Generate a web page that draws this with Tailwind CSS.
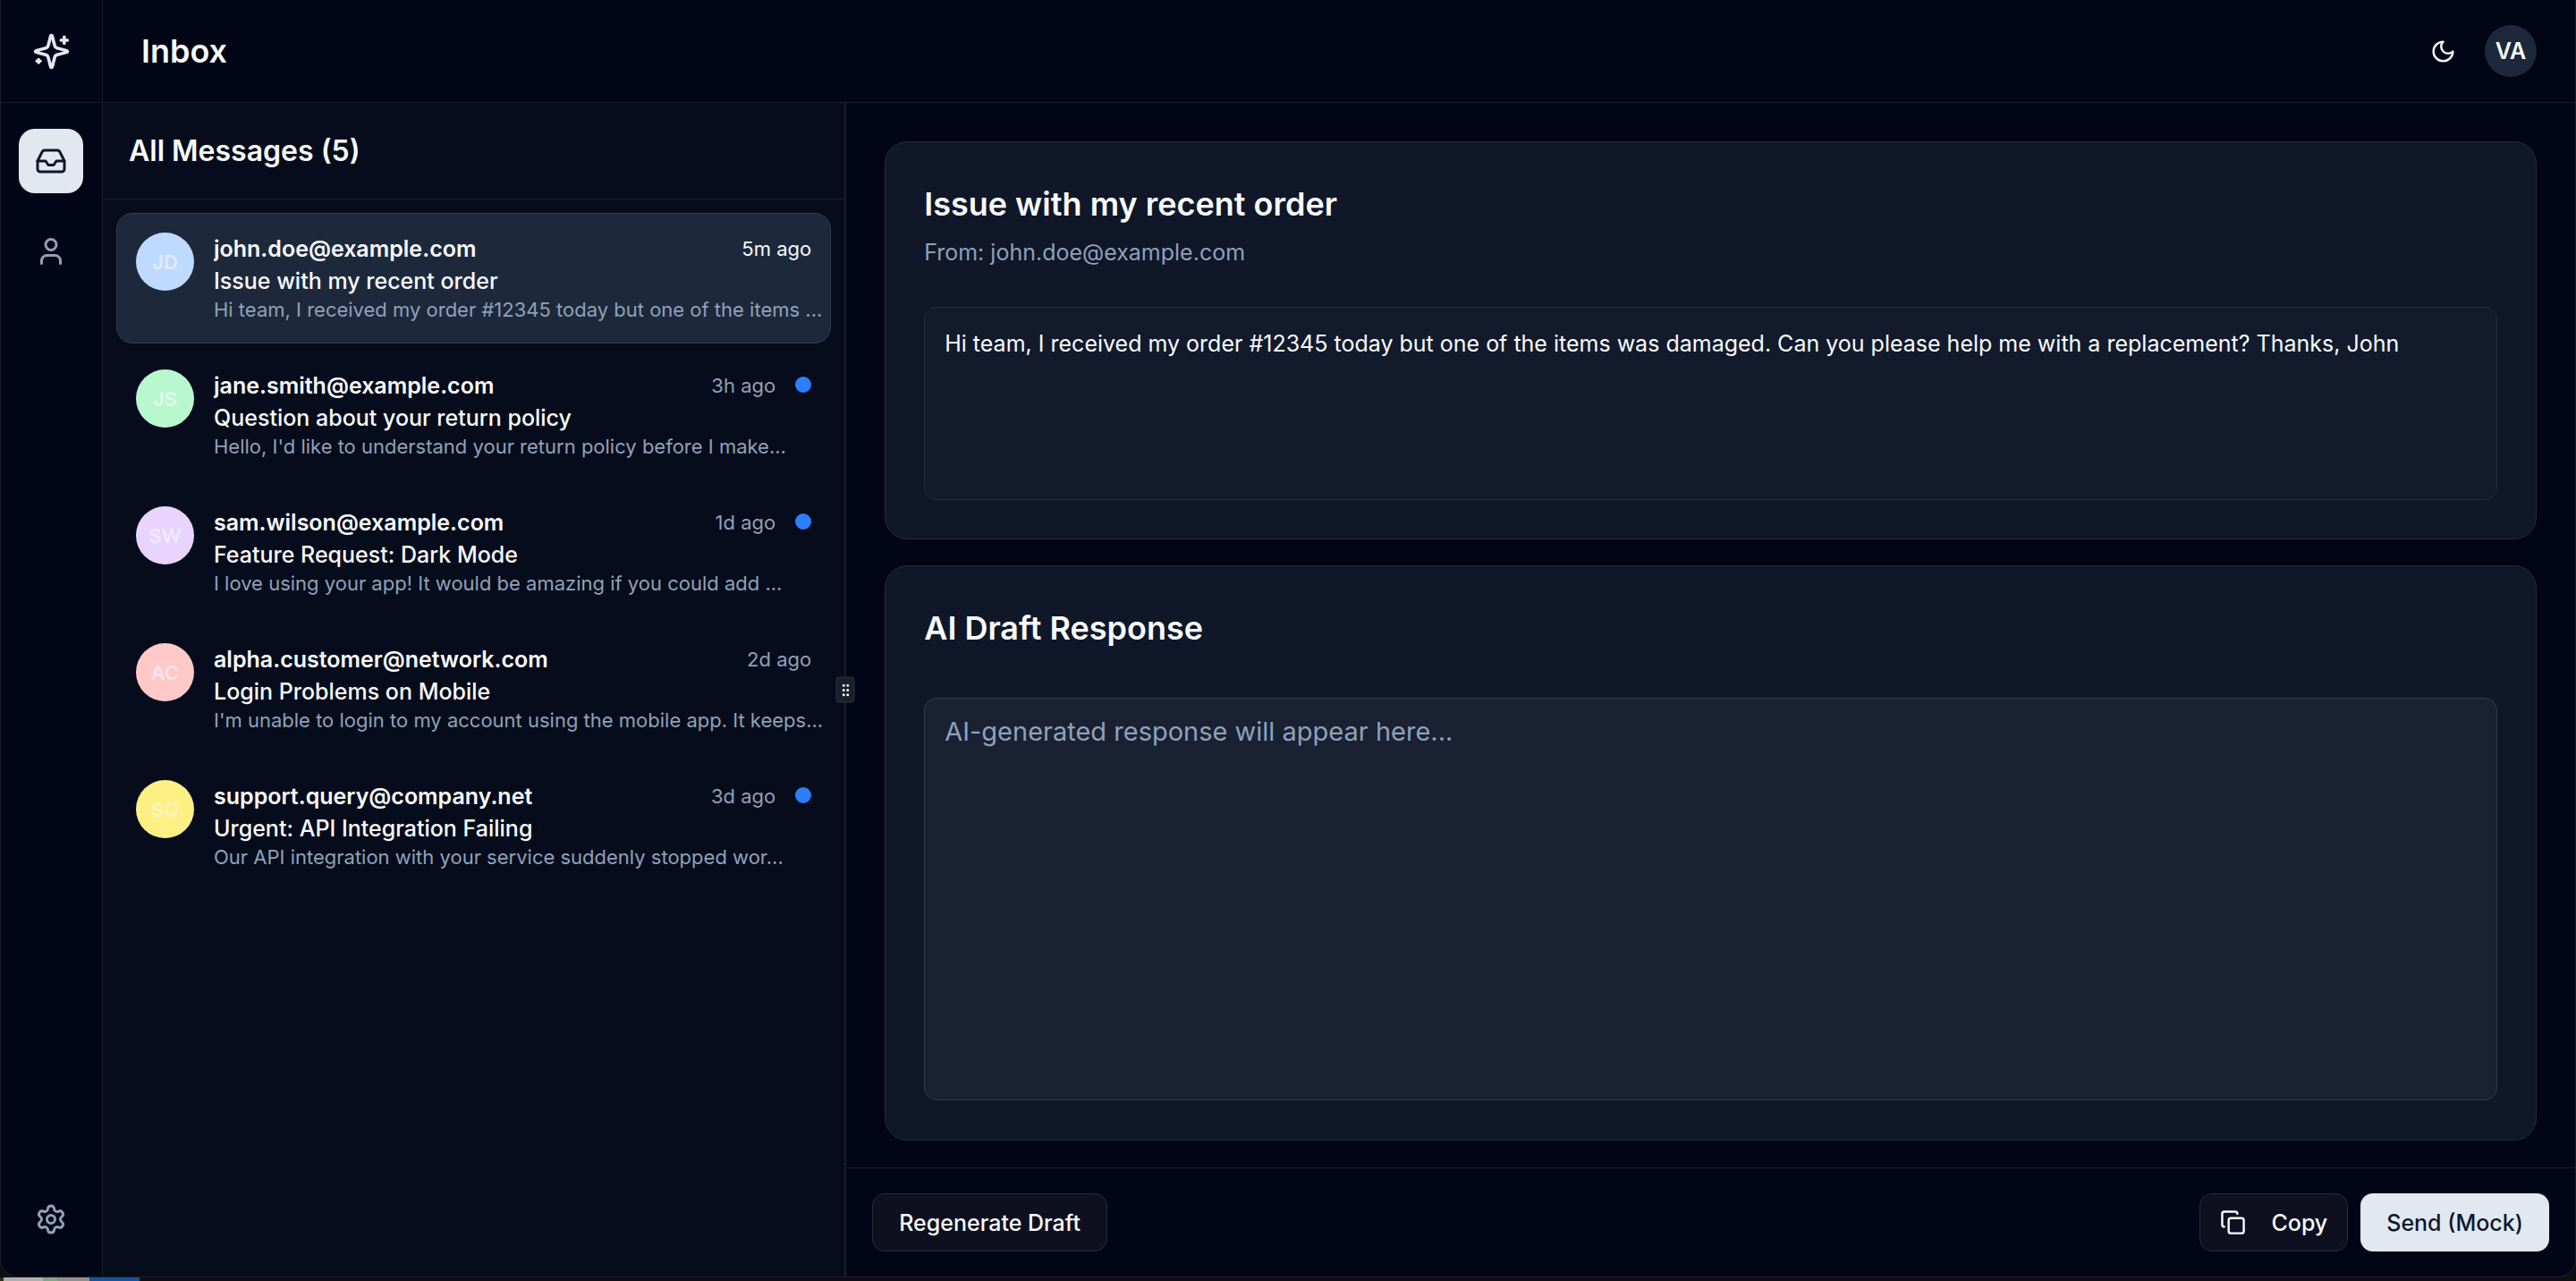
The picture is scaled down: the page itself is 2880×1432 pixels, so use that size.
<!DOCTYPE html>
<html lang="en">
<head>
<meta charset="utf-8">
<title>Inbox</title>
<script src="https://cdn.jsdelivr.net/npm/@tailwindcss/browser@4"></script>
</head>
<body class="h-screen overflow-hidden bg-[#0e0e10] font-[Inter,sans-serif] text-[25px] leading-9 text-slate-50">
<div class="flex h-full flex-col">
  <div class="flex min-h-0 flex-1 overflow-hidden rounded-b-[20px] border-x border-b border-[#1b1e2c] bg-[#020515]">

    <nav aria-label="Main" class="flex w-[114px] shrink-0 flex-col items-center border-r border-[#1b1e2c] pr-px">
      <div class="flex h-[115px] w-full items-center justify-center border-b border-[#1b1e2c]">
        <svg class="size-[43px] text-slate-200" viewBox="0 0 24 24" fill="none" stroke="currentColor" stroke-width="2" stroke-linecap="round" stroke-linejoin="round"><path d="M9.937 15.5A2 2 0 0 0 8.5 14.063l-6.135-1.582a.5.5 0 0 1 0-.962L8.5 9.936A2 2 0 0 0 9.937 8.5l1.582-6.135a.5.5 0 0 1 .963 0L14.063 8.5A2 2 0 0 0 15.5 9.937l6.135 1.581a.5.5 0 0 1 0 .964L15.5 14.063a2 2 0 0 0-1.437 1.437l-1.582 6.135a.5.5 0 0 1-.963 0z"/><path d="M20 3v4"/><path d="M22 5h-4"/><path d="M4 17v2"/><path d="M5 18H3"/></svg>
      </div>
      <div class="flex flex-1 flex-col gap-[29px] pt-[29px]">
        <a href="#inbox" aria-label="Inbox" aria-current="page" class="flex size-[72px] items-center justify-center rounded-[18px] bg-slate-200 text-slate-900">
          <svg class="size-9" viewBox="0 0 24 24" fill="none" stroke="currentColor" stroke-width="2" stroke-linecap="round" stroke-linejoin="round"><path d="M22 12h-6l-2 3h-4l-2-3H2"/><path d="M5.45 5.11 2 12v6a2 2 0 0 0 2 2h16a2 2 0 0 0 2-2v-6l-3.45-6.89A2 2 0 0 0 16.76 4H7.24a2 2 0 0 0-1.79 1.11z"/></svg>
        </a>
        <a href="#profile" aria-label="Profile" class="flex size-[72px] items-center justify-center rounded-[18px] text-[#90a1b9]">
          <svg class="size-9" viewBox="0 0 24 24" fill="none" stroke="currentColor" stroke-width="2" stroke-linecap="round" stroke-linejoin="round"><path d="M19 21v-2a4 4 0 0 0-4-4H9a4 4 0 0 0-4 4v2"/><circle cx="12" cy="7" r="4"/></svg>
        </a>
      </div>
      <a href="#settings" aria-label="Settings" class="mb-7 flex size-[72px] items-center justify-center rounded-[18px] text-[#90a1b9]">
        <svg class="size-9" viewBox="0 0 24 24" fill="none" stroke="currentColor" stroke-width="2" stroke-linecap="round" stroke-linejoin="round"><path d="M9.671 4.136a2.34 2.34 0 0 1 4.659 0 2.34 2.34 0 0 0 3.319 1.915 2.34 2.34 0 0 1 2.33 4.033 2.34 2.34 0 0 0 0 3.831 2.34 2.34 0 0 1-2.33 4.033 2.34 2.34 0 0 0-3.319 1.915 2.34 2.34 0 0 1-4.659 0 2.34 2.34 0 0 0-3.32-1.915 2.34 2.34 0 0 1-2.33-4.033 2.34 2.34 0 0 0 0-3.831A2.34 2.34 0 0 1 6.35 6.051a2.34 2.34 0 0 0 3.319-1.915"/><circle cx="12" cy="12" r="3"/></svg>
      </a>
    </nav>

    <div class="flex min-w-0 flex-1 flex-col">
      <header class="flex h-[115px] shrink-0 items-center justify-between border-b border-[#1b1e2c] px-[43px]">
        <h1 class="text-[36px] font-semibold leading-none">Inbox</h1>
        <div class="flex items-center gap-[14px]">
          <button type="button" aria-label="Toggle theme" class="flex size-[65px] items-center justify-center rounded-[14px]">
            <svg class="size-[29px]" viewBox="0 0 24 24" fill="none" stroke="currentColor" stroke-width="2" stroke-linecap="round" stroke-linejoin="round"><path d="M12 3a6 6 0 0 0 9 9 9 9 0 1 1-9-9Z"/></svg>
          </button>
          <button type="button" aria-label="Account" class="flex size-[58px] items-center justify-center rounded-full bg-[#1d293b] font-semibold">VA</button>
        </div>
      </header>

      <div class="flex min-h-0 flex-1">
        <section aria-label="Messages" class="flex w-[30%] shrink-0 flex-col bg-[#060c1b]">
          <h2 class="flex h-[108px] shrink-0 items-center border-b border-[#1b1e2c] px-[29px] text-[32px] font-semibold">All Messages (5)</h2>
          <ul class="flex flex-col gap-[7px] px-[15px] pt-[15px]">
            <li>
              <a href="#m1" aria-current="true" class="flex items-start gap-[22px] rounded-[18px] border border-[#333d4e] bg-[#1d293b] px-[21px] pb-[22px] pt-[21px]">
                <span class="flex size-[65px] shrink-0 items-center justify-center rounded-full bg-blue-200 text-[22px] font-semibold text-[#e2ecfb]">JD</span>
                <span class="min-w-0 flex-1">
                  <span class="flex items-center justify-between gap-3"><span class="truncate font-semibold">john.doe@example.com</span><span class="shrink-0 text-[22px]">5m ago</span></span>
                  <span class="block truncate font-medium">Issue with my recent order</span>
                  <span class="block whitespace-nowrap text-[22px] leading-[29px] text-[#90a1b9]">Hi team, I received my order #12345 today but one of the items ...</span>
                </span>
              </a>
            </li>
            <li>
              <a href="#m2" class="flex items-start gap-[22px] rounded-[18px] border border-transparent px-[21px] pb-[22px] pt-[21px]">
                <span class="flex size-[65px] shrink-0 items-center justify-center rounded-full bg-green-200 text-[22px] font-semibold text-[#e0f9ea]">JS</span>
                <span class="min-w-0 flex-1">
                  <span class="flex items-center justify-between gap-3"><span class="truncate font-semibold">jane.smith@example.com</span><span class="shrink-0 text-[22px] text-[#90a1b9]">3h ago</span></span>
                  <span class="block truncate font-medium">Question about your return policy</span>
                  <span class="block whitespace-nowrap text-[22px] leading-[29px] text-[#90a1b9]">Hello, I'd like to understand your return policy before I make...</span>
                </span>
                <span class="mt-2 size-[18px] shrink-0 rounded-full bg-[#2b7fff]"></span>
              </a>
            </li>
            <li>
              <a href="#m3" class="flex items-start gap-[22px] rounded-[18px] border border-transparent px-[21px] pb-[22px] pt-[21px]">
                <span class="flex size-[65px] shrink-0 items-center justify-center rounded-full bg-purple-200 text-[22px] font-semibold text-[#f1e9fc]">SW</span>
                <span class="min-w-0 flex-1">
                  <span class="flex items-center justify-between gap-3"><span class="truncate font-semibold">sam.wilson@example.com</span><span class="shrink-0 text-[22px] text-[#90a1b9]">1d ago</span></span>
                  <span class="block truncate font-medium">Feature Request: Dark Mode</span>
                  <span class="block whitespace-nowrap text-[22px] leading-[29px] text-[#90a1b9]">I love using your app! It would be amazing if you could add ...</span>
                </span>
                <span class="mt-2 size-[18px] shrink-0 rounded-full bg-[#2b7fff]"></span>
              </a>
            </li>
            <li>
              <a href="#m4" class="flex items-start gap-[22px] rounded-[18px] border border-transparent px-[21px] pb-[22px] pt-[21px]">
                <span class="flex size-[65px] shrink-0 items-center justify-center rounded-full bg-red-200 text-[22px] font-semibold text-[#fbe4e7]">AC</span>
                <span class="min-w-0 flex-1">
                  <span class="flex items-center justify-between gap-3"><span class="truncate font-semibold">alpha.customer@network.com</span><span class="shrink-0 text-[22px] text-[#90a1b9]">2d ago</span></span>
                  <span class="block truncate font-medium">Login Problems on Mobile</span>
                  <span class="block whitespace-nowrap text-[22px] leading-[29px] text-[#90a1b9]">I'm unable to login to my account using the mobile app. It keeps...</span>
                </span>
              </a>
            </li>
            <li>
              <a href="#m5" class="flex items-start gap-[22px] rounded-[18px] border border-transparent px-[21px] pb-[22px] pt-[21px]">
                <span class="flex size-[65px] shrink-0 items-center justify-center rounded-full bg-yellow-200 text-[22px] font-semibold text-[#fcf4be]">SQ</span>
                <span class="min-w-0 flex-1">
                  <span class="flex items-center justify-between gap-3"><span class="truncate font-semibold">support.query@company.net</span><span class="shrink-0 text-[22px] text-[#90a1b9]">3d ago</span></span>
                  <span class="block truncate font-medium">Urgent: API Integration Failing</span>
                  <span class="block whitespace-nowrap text-[22px] leading-[29px] text-[#90a1b9]">Our API integration with your service suddenly stopped wor...</span>
                </span>
                <span class="mt-2 size-[18px] shrink-0 rounded-full bg-[#2b7fff]"></span>
              </a>
            </li>
          </ul>
        </section>

        <div role="separator" aria-orientation="vertical" class="relative w-[2px] shrink-0 bg-[#1b1e2c]">
          <div class="absolute left-1/2 top-1/2 flex h-[29px] w-[21px] -translate-x-1/2 -translate-y-1/2 items-center justify-center rounded-[4px] border border-[#33353f] bg-[#1b1e2c]">
            <svg class="size-[18px]" viewBox="0 0 24 24" fill="none" stroke="currentColor" stroke-width="2"><circle cx="9" cy="12" r="1"/><circle cx="9" cy="5" r="1"/><circle cx="9" cy="19" r="1"/><circle cx="15" cy="12" r="1"/><circle cx="15" cy="5" r="1"/><circle cx="15" cy="19" r="1"/></svg>
          </div>
        </div>

        <main class="flex min-w-0 flex-1 flex-col">
          <div class="flex min-h-0 flex-1 flex-col gap-[29px] px-[43px] pb-[30px] pt-[43px]">
            <article class="rounded-[25px] border border-[#242c3d] bg-[#0f1729] px-[43px] pb-[43px] pt-[47px]">
              <h2 class="text-[36px] font-semibold leading-[45px]">Issue with my recent order</h2>
              <p class="mt-[13px] text-[#90a1b9]">From: john.doe@example.com</p>
              <div class="mt-[43px] h-[216px] rounded-[14px] border border-[#242c3d] bg-[#121a2c] p-[22px]">Hi team, I received my order #12345 today but one of the items was damaged. Can you please help me with a replacement? Thanks, John</div>
            </article>
            <section class="flex min-h-0 flex-1 flex-col rounded-[25px] border border-[#242c3d] bg-[#0f1729] px-[43px] pb-11 pt-[47px]">
              <h2><label for="draft" class="block text-[36px] font-semibold leading-[45px]">AI Draft Response</label></h2>
              <textarea id="draft" placeholder="AI-generated response will appear here..." class="mt-[55px] block min-h-0 w-full flex-1 resize-none rounded-[14px] border border-[#343b4b] bg-[#1a2133] px-[22px] py-[15px] text-[29px] leading-[43px] placeholder:text-[#90a1b9]"></textarea>
            </section>
          </div>
          <footer class="flex items-center gap-[14px] border-t border-[#1b1e2c] px-[29px] py-7">
            <button type="button" class="mr-auto flex h-[65px] items-center rounded-[14px] border border-[#2a2c38] bg-[#0e1020] px-[29px] font-medium">Regenerate Draft</button>
            <button type="button" class="flex h-[65px] items-center gap-7 rounded-[14px] border border-[#2a2c38] bg-[#0e1020] px-[22px] font-medium">
              <svg class="size-[29px]" viewBox="0 0 24 24" fill="none" stroke="currentColor" stroke-width="2" stroke-linecap="round" stroke-linejoin="round"><rect width="14" height="14" x="8" y="8" rx="2" ry="2"/><path d="M4 16c-1.1 0-2-.9-2-2V4c0-1.1.9-2 2-2h10c1.1 0 2 .9 2 2"/></svg>
              Copy</button>
            <button type="button" class="flex h-[65px] items-center rounded-[14px] bg-slate-200 px-[29px] font-medium text-slate-900">Send (Mock)</button>
          </footer>
        </main>
      </div>
    </div>
  </div>
  <!-- sliver of desktop below the window -->
  <div class="flex h-1 shrink-0">
    <div class="w-1 bg-[#26330f]"></div>
    <div class="w-11 bg-[#b0b0b0]"></div>
    <div class="w-4 bg-[#7fa883]"></div>
    <div class="w-9 bg-[#8f8f8f]"></div>
    <div class="w-14 bg-[#15549a]"></div>
  </div>
</div>
</body>
</html>
